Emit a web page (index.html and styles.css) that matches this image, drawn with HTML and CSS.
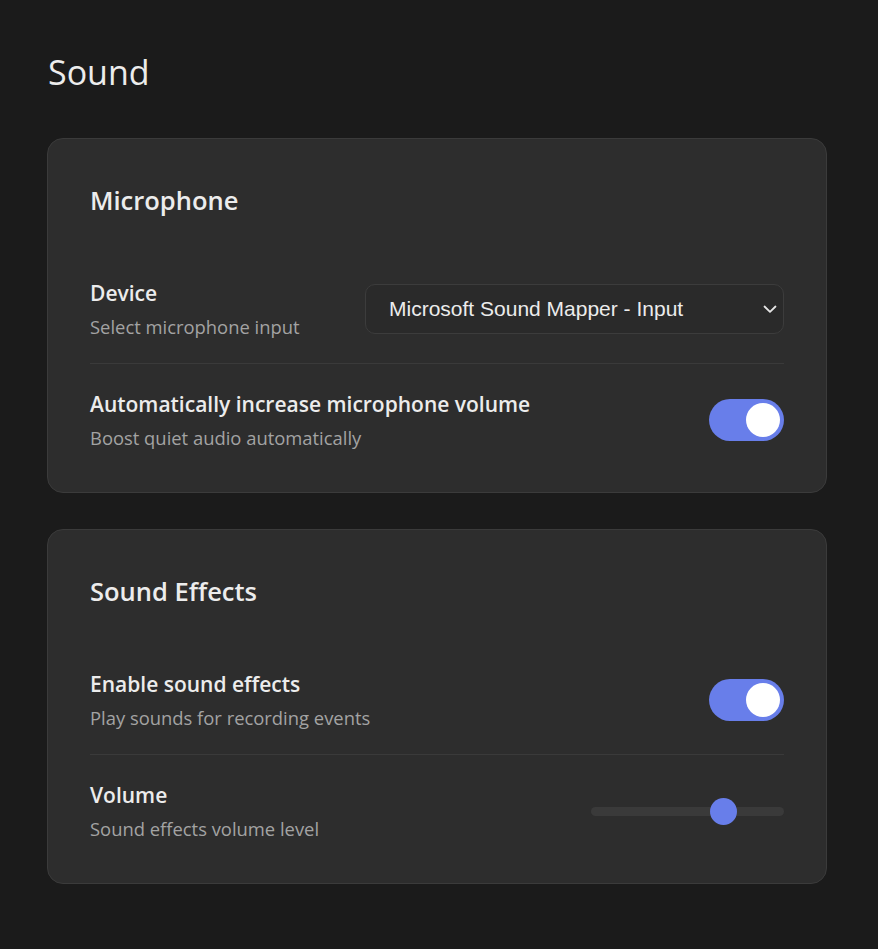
FILE: index.html
```html
<!DOCTYPE html>
<html lang="en">
<head>
<meta charset="utf-8">
<title>Sound</title>
<link rel="stylesheet" href="styles.css">
</head>
<body>
<main class="page">
  <h1 class="page-title">Sound</h1>

  <section class="card">
    <h2 class="card-title">Microphone</h2>
    <div class="rows">
      <div class="row">
        <div class="row-text">
          <div class="row-label">Device</div>
          <div class="row-desc">Select microphone input</div>
        </div>
        <div class="select">
          <span class="select-value">Microsoft Sound Mapper - Input</span>
          <svg class="chevron" width="14" height="14" viewBox="0 0 14 14"><path d="M1.5 4.5 L7 9.8 L12.5 4.5" fill="none" stroke="#e6e6e6" stroke-width="1.8" stroke-linecap="round" stroke-linejoin="round"/></svg>
        </div>
      </div>
      <div class="row">
        <div class="row-text">
          <div class="row-label">Automatically increase microphone volume</div>
          <div class="row-desc">Boost quiet audio automatically</div>
        </div>
        <div class="toggle on"><span class="knob"></span></div>
      </div>
    </div>
  </section>

  <section class="card">
    <h2 class="card-title">Sound Effects</h2>
    <div class="rows">
      <div class="row">
        <div class="row-text">
          <div class="row-label">Enable sound effects</div>
          <div class="row-desc">Play sounds for recording events</div>
        </div>
        <div class="toggle on"><span class="knob"></span></div>
      </div>
      <div class="row">
        <div class="row-text">
          <div class="row-label">Volume</div>
          <div class="row-desc">Sound effects volume level</div>
        </div>
        <div class="slider">
          <div class="slider-track"></div>
          <div class="slider-thumb" style="left: 119px;"></div>
        </div>
      </div>
    </div>
  </section>
</main>
</body>
</html>
```

FILE: styles.css
```css
* { box-sizing: border-box; }
html, body {
  margin: 0;
  padding: 0;
  background: #1b1b1b;
}
body {
  font-family: "Open Sans", "Noto Sans", "DejaVu Sans", sans-serif;
  color: #e8e8e8;
}
.page {
  padding: 48px 51px 40px 47px;
  display: flex;
  flex-direction: column;
  gap: 36px;
}
.page-title {
  margin: 0 0 6px 1px;
  font-size: 34px;
  font-weight: 500;
  line-height: 48px;
  color: #ececec;
}
.card {
  background: #2d2d2d;
  border: 1px solid #3b3b3b;
  border-radius: 16px;
  padding: 41px 42px 42px 42px;
}
.card-title {
  margin: 0 0 59px 0;
  font-size: 25.5px;
  font-weight: 600;
  line-height: 40px;
  color: #ececec;
}
.rows {
  display: flex;
  flex-direction: column;
}
.row {
  display: flex;
  align-items: center;
  justify-content: space-between;
  padding: 26px 0 25px;
  border-bottom: 1px solid #3a3a3a;
}
.row:first-child { padding-top: 0; padding-bottom: 24px; }
.row:last-child { border-bottom: none; padding-bottom: 0; }
.row-label {
  font-size: 21px;
  font-weight: 600;
  line-height: 28px;
  color: #ececec;
}
.row-desc {
  margin-top: 8px;
  font-size: 18.4px;
  line-height: 24px;
  color: #a3a3a3;
}
.select {
  width: 419px;
  height: 50px;
  border: 1px solid #3c3c3c;
  border-radius: 10px;
  background: #2a2a2a;
  display: flex;
  align-items: center;
  justify-content: space-between;
  padding: 0 6px 0 23px;
  margin-top: -1px;
}
.select-value {
  font-family: "Liberation Sans", Arial, sans-serif;
  font-size: 21px;
  color: #ececec;
}
.chevron { display: block; }
.toggle {
  width: 75px;
  height: 42px;
  border-radius: 21px;
  background: #687eea;
  position: relative;
  flex: none;
}
.knob {
  position: absolute;
  top: 4px;
  right: 4px;
  width: 34px;
  height: 34px;
  border-radius: 50%;
  background: #ffffff;
}
.slider {
  width: 193px;
  height: 26px;
  position: relative;
  flex: none;
}
.slider-track {
  position: absolute;
  left: 0;
  right: 0;
  top: 9px;
  height: 9px;
  border-radius: 5px;
  background: #3a3a3a;
}
.slider-thumb {
  position: absolute;
  top: 0;
  width: 27px;
  height: 27px;
  border-radius: 50%;
  background: #687eea;
}
```
